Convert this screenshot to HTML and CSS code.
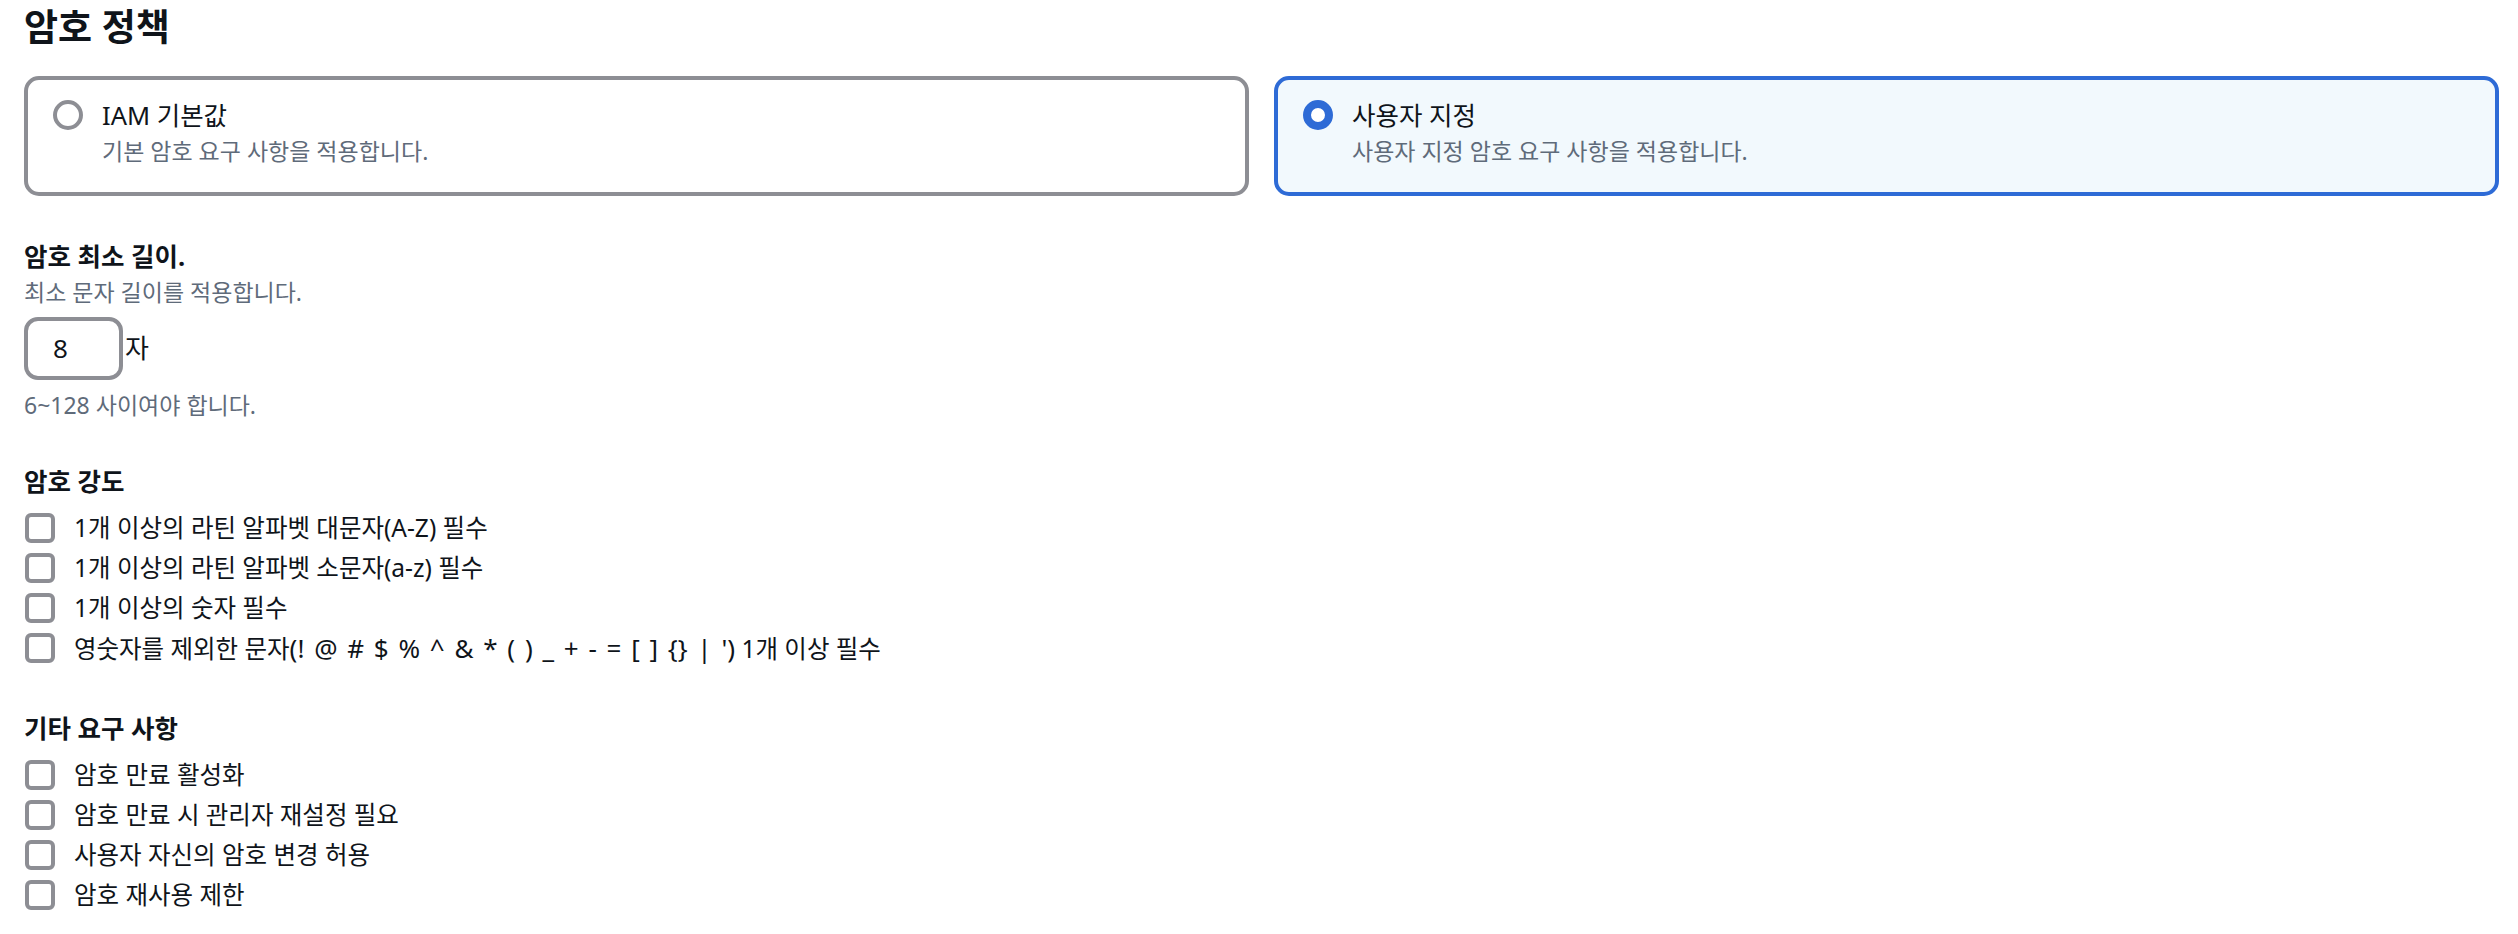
FILE: index.html
```html
<!DOCTYPE html>
<html lang="ko">
<head>
<meta charset="utf-8">
<title>암호 정책</title>
<link rel="stylesheet" href="styles.css">
</head>
<body>
<main class="page">
  <h2 class="page-title">암호 정책</h2>

  <div class="tiles">
    <div class="tile">
      <span class="radio"></span>
      <div class="tile-text">
        <div class="tile-label">IAM 기본값</div>
        <div class="tile-desc">기본 암호 요구 사항을 적용합니다.</div>
      </div>
    </div>
    <div class="tile tile-selected">
      <span class="radio radio-checked"></span>
      <div class="tile-text">
        <div class="tile-label">사용자 지정</div>
        <div class="tile-desc">사용자 지정 암호 요구 사항을 적용합니다.</div>
      </div>
    </div>
  </div>

  <section class="field">
    <div class="field-label">암호 최소 길이.</div>
    <div class="field-desc">최소 문자 길이를 적용합니다.</div>
    <div class="length-row">
      <div class="num-input">8</div>
      <span class="unit">자</span>
    </div>
    <div class="field-hint">6~128 사이여야 합니다.</div>
  </section>

  <section class="field">
    <div class="field-label">암호 강도</div>
    <ul class="checks">
      <li class="check"><span class="box"></span><span>1개 이상의 라틴 알파벳 대문자(A-Z) 필수</span></li>
      <li class="check"><span class="box"></span><span>1개 이상의 라틴 알파벳 소문자(a-z) 필수</span></li>
      <li class="check"><span class="box"></span><span>1개 이상의 숫자 필수</span></li>
      <li class="check"><span class="box"></span><span>영숫자를 제외한 문자<span class="symbols">(! @ # $ % ^ &amp; * ( ) _ + - = [ ] {} | ')</span> 1개 이상 필수</span></li>
    </ul>
  </section>

  <section class="field">
    <div class="field-label">기타 요구 사항</div>
    <ul class="checks">
      <li class="check"><span class="box"></span><span>암호 만료 활성화</span></li>
      <li class="check"><span class="box"></span><span>암호 만료 시 관리자 재설정 필요</span></li>
      <li class="check"><span class="box"></span><span>사용자 자신의 암호 변경 허용</span></li>
      <li class="check"><span class="box"></span><span>암호 재사용 제한</span></li>
    </ul>
  </section>
</main>
</body>
</html>
```

FILE: styles.css
```css
* { box-sizing: border-box; }

html, body {
  margin: 0;
  padding: 0;
  background: #ffffff;
}

body {
  font-family: "Noto Sans", "Noto Sans CJK KR", sans-serif;
  color: #0f141a;
  font-size: 24.5px;
  line-height: 40px;
}

.page {
  padding: 5px 19px 0 24px;
}

.page-title {
  margin: 0 0 27px;
  font-size: 37px;
  line-height: 44px;
  font-weight: 700;
}

.tiles {
  display: grid;
  grid-template-columns: 1fr 1fr;
  gap: 25px;
}

.tile {
  height: 120px;
  border: 4px solid #8d8e94;
  border-radius: 15px;
  padding: 20px 25px;
  display: flex;
  align-items: flex-start;
  gap: 19px;
  background: #ffffff;
}

.tile-selected {
  border-color: #2e6bd6;
  background: #f2f9fd;
}

.radio {
  flex: none;
  width: 30px;
  height: 30px;
  border-radius: 50%;
  border: 4px solid #8d8e94;
  background: #ffffff;
}

.radio-checked {
  border: 8px solid #2e6bd6;
}

.tile-label {
  font-size: 25.5px;
  line-height: 30px;
}

.tile-desc {
  margin-top: 6px;
  font-size: 23px;
  line-height: 30px;
  color: #5f6b7a;
}

.field {
  margin-top: 40px;
}

.field-label {
  font-size: 25.5px;
  font-weight: 700;
  line-height: 40px;
}

.field-desc {
  font-size: 23px;
  line-height: 32px;
  color: #5f6b7a;
}

.length-row {
  margin-top: 9px;
  display: flex;
  align-items: center;
  gap: 2px;
}

.num-input {
  width: 99px;
  height: 63px;
  border: 4px solid #8d8e94;
  border-radius: 14px;
  padding-left: 25px;
  font-size: 26px;
  line-height: 55px;
}

.unit {
  font-size: 26px;
  line-height: 55px;
}

.field-hint {
  margin-top: 9px;
  font-size: 23px;
  line-height: 32px;
  color: #5f6b7a;
}

.checks {
  list-style: none;
  margin: 7px 0 0;
  padding: 0;
}

.check {
  display: flex;
  align-items: center;
  gap: 19px;
  height: 40px;
  padding-left: 1px;
}

.symbols {
  font-size: 26px;
  word-spacing: 3px;
}

.box {
  flex: none;
  width: 30px;
  height: 30px;
  border: 4px solid #8d8e94;
  border-radius: 6px;
  background: #ffffff;
}
```
